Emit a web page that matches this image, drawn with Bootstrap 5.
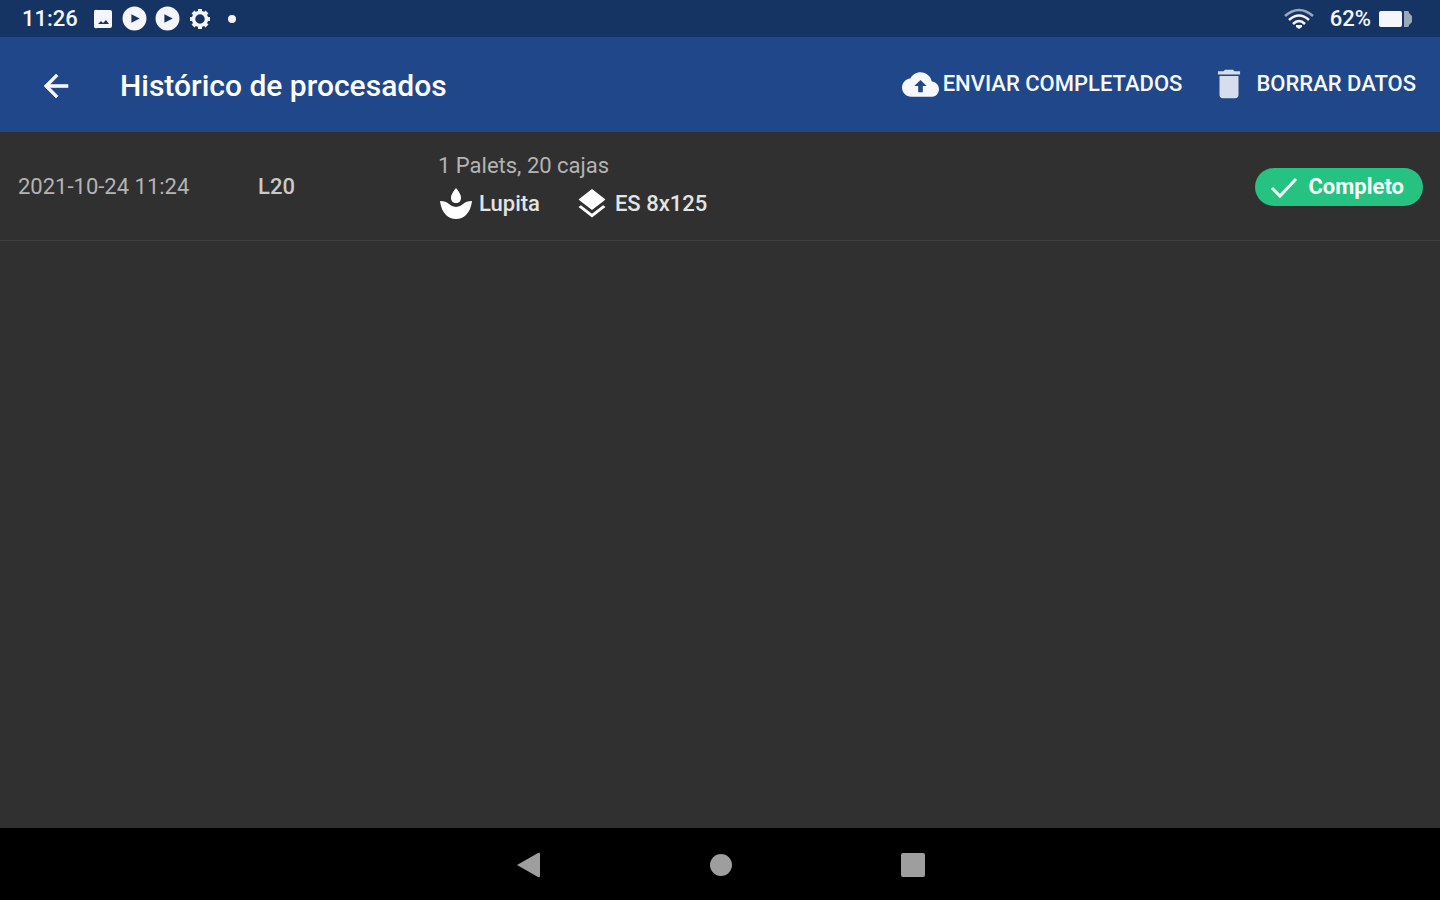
<!DOCTYPE html>
<html lang="es" data-bs-theme="dark">
<head>
<meta charset="utf-8">
<meta name="viewport" content="width=device-width, initial-scale=1">
<title>Histórico de procesados</title>
<link href="https://cdn.jsdelivr.net/npm/bootstrap@5.3.0/dist/css/bootstrap.min.css" rel="stylesheet">
<style>
  body { font-family: Roboto, "Liberation Sans", sans-serif; background: #303030; color: #b4b4b4; font-size: 22px; line-height: 28px; }
  svg { display: block; flex: none; fill: currentColor; }
  .status-bar { background: #163463; color: #f4f6fb; height: 37px; padding: 0 27px 0 22px; font-weight: 500; }
  .app-bar { background: #20478a; color: #f6f8fc; min-height: 95px; padding: 2px 24px 0 38px; }
  .app-title { font-size: 30px; line-height: 36px; font-weight: 500; margin-left: 46px; }
  .plain-btn { border: 0; padding: 0; background: none; color: inherit; }
  .action-group { gap: 28px; }
  .action { font-size: 22px; font-weight: 500; line-height: 34px; padding-bottom: 3px; }
  .record { --bs-border-color: #404040; padding: 20px 17px 18px 18px; }
  .col-date { width: 240px; }
  .col-lot { width: 180px; color: #cacaca; font-weight: 500; }
  .detail { color: #e4e4e4; font-weight: 500; gap: 34px; margin-top: 6px; }
  .detail svg { color: #fff; }
  .tight { gap: 5px; }
  .status-pill { background: #26c281; color: #f4fff9; padding: 0 19px 0 12px; height: 38px; font-weight: 700; }
  .nav-keys { background: #000; color: #9e9e9e; height: 72px; gap: 128px; padding: 2px 0 0 2px; }
  .nav-keys button { width: 64px; height: 64px; }
</style>
</head>
<body class="min-vh-100 d-flex flex-column">

<div class="status-bar d-flex align-items-center justify-content-between">
  <div class="d-flex align-items-center">
    <span class="me-3">11:26</span>
    <div class="d-flex align-items-center gap-2">
      <svg width="20" height="20" viewBox="0 0 20 20" aria-hidden="true"><path fill-rule="evenodd" d="M3 1h13a2 2 0 0 1 2 2v14a2 2 0 0 1-2 2H3a2 2 0 0 1-3-2V3a2 2 0 0 1 3-2zM4 15h11l-3-4-3 3-2-2z"/></svg>
      <svg width="25" height="25" viewBox="0 0 24 24" aria-hidden="true"><path fill-rule="evenodd" d="M12 .500a11.500 11.500 0 1 0 0 23 11.500 11.500 0 0 0 0-23zM9 8l8 4-8 4z"/></svg>
      <svg width="25" height="25" viewBox="0 0 24 24" aria-hidden="true"><path fill-rule="evenodd" d="M12 .500a11.500 11.500 0 1 0 0 23 11.500 11.500 0 0 0 0-23zM9 8l8 4-8 4z"/></svg>
      <svg width="24" height="24" viewBox="0 0 24 24" fill="none" stroke="currentColor" aria-hidden="true"><circle cx="12" cy="12" r="6.500" fill="none" stroke-width="3.500"/><path stroke-width="4" d="M12 2v3M12 19v3M2 12h3M19 12h3M5 5l2 2M17 17l2 2M5 19l2-2M17 7l2-2"/></svg>
      <svg width="24" height="24" viewBox="0 0 24 24" aria-hidden="true"><circle cx="12" cy="12" r="4"/></svg>
    </div>
  </div>
  <div class="d-flex align-items-center">
    <svg class="me-3" width="30" height="24" viewBox="0 0 30 24" aria-hidden="true"><g fill="none" stroke="currentColor" stroke-width="2.500"><path d="M1 9Q15-3 29 9" opacity=".6"/><path d="M5 13Q15 4 25 13"/><path d="M9 17Q15 11 21 17"/></g><path d="M12 18h6v2l-3 2-3-2z"/></svg>
    <span class="me-2">62%</span>
    <svg width="34" height="20" viewBox="0 0 34 20" aria-hidden="true"><rect y="2" width="23" height="16" rx="2"/><path opacity=".6" d="M25 2h4q1 0 1 2l3 3v6l-3 3q0 2-1 2h-4z"/></svg>
  </div>
</div>

<header class="app-bar d-flex align-items-center">
  <button type="button" class="plain-btn" aria-label="Volver">
    <svg width="36" height="36" viewBox="0 0 24 24"><path stroke="currentColor" stroke-width=".4" d="M20 11H7.830l5.590-5.590L12 4l-8 8 8 8 1.410-1.410L7.830 13H20v-2z"/></svg>
  </button>
  <h1 class="app-title mb-0">Histórico de procesados</h1>
  <div class="action-group ms-auto d-flex align-items-center">
    <button type="button" class="plain-btn action d-flex align-items-center gap-1">
      <svg width="37" height="37" viewBox="0 0 24 24" aria-hidden="true"><path d="M19.350 10.040C18.670 6.590 15.640 4 12 4 9.110 4 6.600 5.640 5.350 8.040 2.340 8.360 0 10.910 0 14c0 3.310 2.690 6 6 6h13c2.760 0 5-2.240 5-5 0-2.640-2.050-4.780-4.650-4.960zM13.500 13v4h-3v-4H8l4-4 4 4h-2.500z"/></svg>
      ENVIAR COMPLETADOS
    </button>
    <button type="button" class="plain-btn action d-flex align-items-center gap-2">
      <svg width="38" height="38" viewBox="0 0 24 24" opacity=".85" aria-hidden="true"><path d="M6 19c0 1.100.900 2 2 2h8c1.100 0 2-.900 2-2V7H6v12zM19 4h-3.500l-1-1h-5l-1 1H5v2h14V4z"/></svg>
      BORRAR DATOS
    </button>
  </div>
</header>

<main class="flex-grow-1">
  <ul class="list-unstyled mb-0">
    <li class="record border-bottom d-flex align-items-center">
      <time class="col-date" datetime="2021-10-24T11:24">2021-10-24 11:24</time>
      <span class="col-lot">L20</span>
      <div class="flex-grow-1">
        <div>1 Palets, 20 cajas</div>
        <div class="detail d-flex align-items-center">
          <span class="tight d-flex align-items-center">
            <svg width="36" height="36" viewBox="0 0 36 36" aria-hidden="true"><path d="M18 2q5 6 5 9.500c0 4-2 5.500-5 5.500s-5-1.500-5-5.500Q13 8 18 2z"/><path d="M2 15q6 0 9 3 3 3 7 3t7-3q3-3 9-3-1 9-6 14-4 4-10 4T8 29Q3 24 2 15z"/></svg>
            Lupita
          </span>
          <span class="tight d-flex align-items-center">
            <svg width="36" height="36" viewBox="0 0 24 24" aria-hidden="true"><path d="M11.990 18.540l-7.370-5.730L3 14.070l9 7 9-7-1.630-1.270-7.380 5.740zM12 16l7.360-5.730L21 9l-9-7-9 7 1.630 1.270L12 16z"/></svg>
            ES 8x125
          </span>
        </div>
      </div>
      <span class="status-pill tight rounded-pill d-flex align-items-center">
        <svg width="36" height="36" viewBox="0 0 36 36" fill="none" stroke="currentColor" stroke-width="3" aria-hidden="true"><path fill="none" d="M5 19l8 8L29 10"/></svg>
        Completo
      </span>
    </li>
  </ul>
</main>

<nav class="nav-keys d-flex align-items-center justify-content-center" aria-label="Sistema">
  <button type="button" class="plain-btn d-flex align-items-center justify-content-center" aria-label="Atrás"><svg width="24" height="26" viewBox="0 0 24 26"><path d="M0 13L21 1q2-1 2 1v22q0 2-2 1z"/></svg></button>
  <button type="button" class="plain-btn d-flex align-items-center justify-content-center" aria-label="Inicio"><svg width="24" height="24" viewBox="0 0 24 24"><circle cx="12" cy="12" r="11"/></svg></button>
  <button type="button" class="plain-btn d-flex align-items-center justify-content-center" aria-label="Recientes"><svg width="24" height="24" viewBox="0 0 24 24"><rect width="24" height="24" rx="2"/></svg></button>
</nav>

<script src="https://cdn.jsdelivr.net/npm/bootstrap@5.3.0/dist/js/bootstrap.bundle.min.js"></script>
</body>
</html>
